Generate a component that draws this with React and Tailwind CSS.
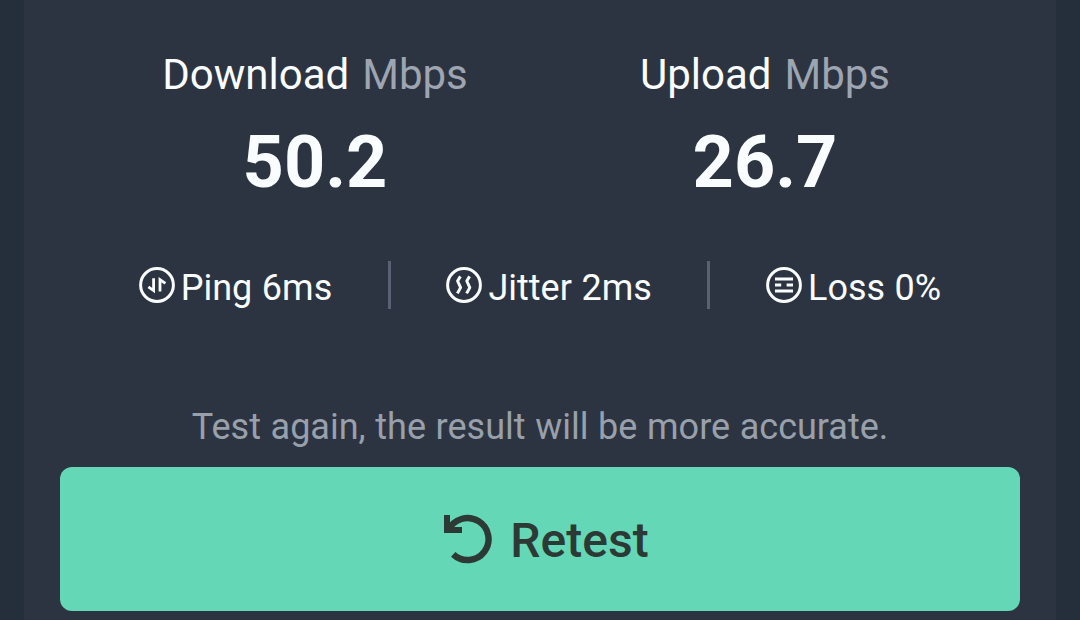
import React from "react";

const PingIcon = () => (
  <svg width="36" height="36" viewBox="0 0 36 36" fill="none" stroke="currentColor">
    <circle cx="18" cy="18" r="16.4" strokeWidth="3" />
    <path d="M14.6 11.2V23.6L9.4 19.8" strokeWidth="2.8" />
    <path d="M21 24.6V12.6L26.4 16.4" strokeWidth="2.8" />
  </svg>
);

const JitterIcon = () => (
  <svg width="36" height="36" viewBox="0 0 36 36" fill="none" stroke="currentColor">
    <circle cx="18" cy="18" r="16.4" strokeWidth="3" />
    <path d="M14.4 9.4L11.6 14L14.6 20.6L11.4 26.4" strokeWidth="3" strokeLinejoin="round" />
    <path d="M23.6 9.4L20.8 14L23.8 20.6L20.6 26.4" strokeWidth="3" strokeLinejoin="round" />
  </svg>
);

const LossIcon = () => (
  <svg width="36" height="36" viewBox="0 0 36 36" fill="none" stroke="currentColor">
    <circle cx="18" cy="18" r="16.4" strokeWidth="3" />
    <path d="M9 12H27M9 18H15.2M20.6 18H27M9 24H27" strokeWidth="3" />
  </svg>
);

const RetestIcon = () => (
  <svg width="50" height="50" viewBox="0 0 50 50" fill="none">
    <path d="M5.5 16.2A21 21 0 1 1 10.2 40.4" stroke="currentColor" strokeWidth="6.4" />
    <path d="M1 1H7V13H19V19H1Z" fill="currentColor" />
  </svg>
);

const speeds = [
  { label: "Download", value: "50.2" },
  { label: "Upload", value: "26.7" },
];

const Stat = ({ icon, children }) => (
  <div className="flex items-center gap-[6px]">
    {icon}
    <span className="pt-[5px] text-4xl leading-[42px] whitespace-nowrap [word-spacing:0.6px]">{children}</span>
  </div>
);

const Divider = () => <div className="w-[3px] h-12 bg-[#596175]" />;

const App = () => {
  return (
    <div className="w-full h-[620px] overflow-hidden bg-[#252e3b] px-6 font-['Roboto',sans-serif] text-[#fafdff]">
      <main className="h-full bg-[#2d3441] px-9 pt-[50px]">
        {/* Speeds */}
        <div className="flex px-[30px]">
          {speeds.map((speed) => (
            <div key={speed.label} className="flex-1 text-center">
              <h2 className="text-[42px] leading-[50px] whitespace-nowrap [word-spacing:2.6px]">
                {speed.label} <span className="text-[#9da5b1]">Mbps</span>
              </h2>
              <p className="mt-[21px] text-7xl leading-[84px] font-bold">{speed.value}</p>
            </div>
          ))}
        </div>

        {/* Connection quality */}
        <div className="mt-14 flex h-12 items-center justify-center gap-[55.6px]">
          <Stat icon={<PingIcon />}>Ping 6ms</Stat>
          <Divider />
          <Stat icon={<JitterIcon />}>Jitter 2ms</Stat>
          <Divider />
          <Stat icon={<LossIcon />}>Loss 0%</Stat>
        </div>

        <p className="mt-[97px] text-center text-4xl leading-[42px] text-[#98a0ab] [word-spacing:0.7px]">
          Test again, the result will be more accurate.
        </p>
        <button className="mt-[19px] flex h-36 w-full items-center justify-center gap-[17px] rounded-xl bg-[#64d8b6] pl-3 text-[#2d3935]">
          <RetestIcon />
          <span className="pt-1 text-5xl leading-[56px] font-medium">Retest</span>
        </button>
      </main>
    </div>
  );
};

export default App;
